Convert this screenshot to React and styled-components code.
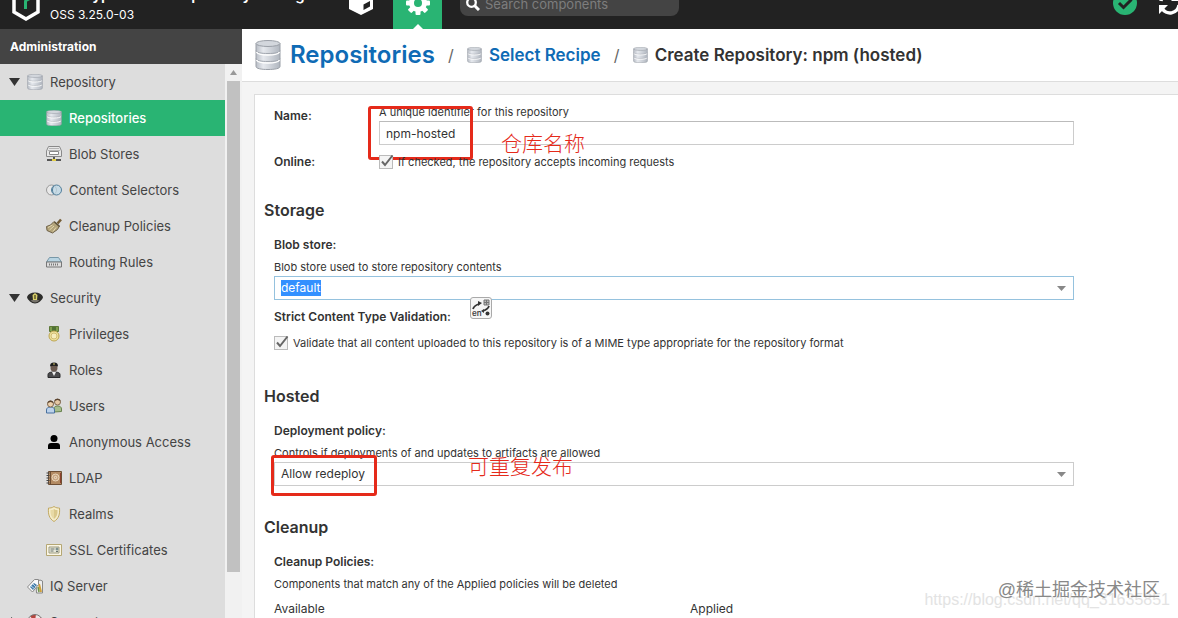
import React from 'react';
import styled, { createGlobalStyle } from 'styled-components';

const GlobalStyle = createGlobalStyle`
  * { box-sizing: border-box; }
  html, body, #root { height: 100%; }
  body {
    margin: 0;
    overflow: hidden;
    font-family: Inter, 'Noto Sans CJK SC', sans-serif;
    font-size: 13px;
    line-height: 16px;
    color: #333;
    background: #f4f4f4;
  }
  h1, h2, p, ul, nav { margin: 0; padding: 0; }
  button, input, select { font: inherit; color: inherit; }
`;

const Page = styled.div`
  position: relative;
  display: flex;
  flex-direction: column;
  height: 100vh;
  overflow: hidden;
`;

/* ---------- top bar ---------- */

const TopBar = styled.header`
  display: flex;
  flex: none;
  align-items: flex-end;
  height: 29px;
  background: #222;
  color: #fff;
`;

const Brand = styled.div`
  display: flex;
  align-items: flex-end;
  gap: 10px;
  flex: 0 0 336px;
  padding: 0 0 6px 12px;

  svg { margin-bottom: 2px; }
`;

const ProductName = styled.div`
  padding-bottom: 2px;
  font-size: 15px;
  font-weight: 600;
  line-height: 20px;
  white-space: nowrap;
`;

const Version = styled.div`
  font-size: 12px;
  line-height: 16px;
`;

const Modes = styled.div`
  display: flex;
  flex: none;
  gap: 8px;
`;

const ModeButton = styled.button`
  position: relative;
  display: flex;
  align-items: flex-end;
  justify-content: center;
  width: 49px;
  height: 48px;
  padding: 0 0 14px;
  border: 0;
  background: ${props => (props.$active ? '#29b473' : 'transparent')};
  color: #fff;

  &::after {
    content: '';
    display: ${props => (props.$active ? 'block' : 'none')};
    position: absolute;
    bottom: 0;
    left: 50%;
    margin-left: -5px;
    border: 5px solid transparent;
    border-top: 0;
    border-bottom-color: #fff;
  }
`;

const SearchBox = styled.label`
  display: flex;
  align-items: center;
  gap: 5px;
  width: 219px;
  height: 24px;
  margin: 0 auto 13px 18px;
  padding-left: 6px;
  border-radius: 8px;
  background: #444;
`;

const SearchInput = styled.input`
  flex: 1;
  min-width: 0;
  padding: 0;
  border: 0;
  outline: 0;
  background: none;
  color: #fff;

  &::placeholder { color: #7d7d7d; opacity: 1; }
`;

const StatusGroup = styled.div`
  display: flex;
  flex: none;
  gap: 21px;
  margin-right: -4px;
  padding-bottom: 14px;
`;

const StatusButton = styled.button`
  display: flex;
  width: 24px;
  height: 24px;
  padding: 0;
  border: 0;
  background: none;
`;

/* ---------- sidebar ---------- */

const Body = styled.div`
  display: flex;
  flex: 1;
  min-height: 0;
`;

const Sidebar = styled.aside`
  display: flex;
  flex: 0 0 242px;
  flex-direction: column;
`;

const SidebarTitle = styled.h2`
  flex: none;
  padding: 10px 10px 9px;
  background: #444;
  color: #fff;
  font-size: 12px;
  font-weight: 700;
`;

const SidebarBody = styled.div`
  display: flex;
  flex: 1;
  min-height: 0;
`;

const Tree = styled.nav`
  flex: 1;
  overflow: hidden;
  background: #ddd;
`;

const TreeItem = styled.a`
  display: flex;
  align-items: center;
  height: 36px;
  padding-left: ${props => (props.$child ? '46px' : '9px')};
  background: ${props => (props.$selected ? '#29b473' : 'transparent')};
  color: ${props => (props.$selected ? '#fff' : '#444')};
  font-weight: ${props => (props.$selected ? 500 : 400)};
  text-decoration: none;
`;

const Arrow = styled.span`
  display: flex;
  width: 18px;
`;

const TreeIcon = styled.span`
  display: flex;
  width: 16px;
  margin-right: 7px;
`;

const ScrollTrack = styled.div`
  display: flex;
  flex-direction: column;
  flex: 0 0 17px;
  align-items: center;
  background: #f1f1f1;

  svg { flex: none; margin: 6px 0; }
`;

const ScrollThumb = styled.div`
  width: 13px;
  height: 91%;
  margin-bottom: 46px;
  background: #c1c1c1;
`;

/* ---------- main ---------- */

const Main = styled.main`
  display: flex;
  flex: 1;
  flex-direction: column;
  min-width: 0;
`;

const Breadcrumb = styled.nav`
  display: flex;
  flex: none;
  align-items: center;
  height: 53px;
  padding-left: 13px;
  border-bottom: 1px solid #ddd;
  background: #fff;
  white-space: nowrap;
`;

const Crumb = styled.a`
  display: flex;
  align-items: center;
  gap: ${props => (props.$root ? '9px' : '7px')};
  color: ${props => (props.href ? '#0f6bb5' : '#333')};
  font-size: ${props => (props.$root ? '24px' : '17px')};
  font-weight: 600;
  line-height: 32px;
  text-decoration: none;
`;

const Slash = styled.span`
  width: 32px;
  color: #666;
  font-size: 16px;
  text-align: center;
`;

const Panel = styled.section`
  flex: 1;
  margin: 12px 0 0 12px;
  padding: 10px 104px 0 9px;
  border: 1px solid #ddd;
  border-right: 0;
  border-bottom: 0;
  background: #fff;
  overflow: hidden;
`;

const Row = styled.div`
  display: flex;
  align-items: flex-start;
  padding-left: 10px;
  min-height: ${props => props.$height};
`;

const RowLabel = styled.label`
  flex: 0 0 105px;
  padding-top: ${props => props.$top || '0'};
  font-size: 12px;
  font-weight: 600;
`;

const RowBody = styled.div`
  position: relative;
  flex: 1;
`;

const Section = styled.div`
  position: relative;
  padding-left: 10px;
`;

const SectionTitle = styled.h2`
  margin-left: -10px;
  padding: ${props => props.$top} 0 17px;
  font-size: 16px;
  font-weight: 600;
  line-height: 20px;
`;

const FieldLabel = styled.label`
  display: block;
  padding: ${props => props.$top || '0'} 0 7px;
  font-size: 12px;
  font-weight: 600;
`;

const Hint = styled.p`
  padding-bottom: 2px;
  font-size: 11px;
  line-height: 14px;
`;

const TextField = styled.input`
  display: block;
  width: 100%;
  height: 24px;
  padding: 0 6px;
  border: 1px solid #ccc;
  border-top-color: #bbb;
  outline: 0;
  font-size: 12px;
`;

const Combo = styled.div`
  display: flex;
  align-items: center;
  justify-content: space-between;
  height: 24px;
  padding: 0 7px 0 6px;
  border: 1px solid ${props => (props.$focused ? '#95c2de' : '#ccc')};
  background: #fff;
`;

const ComboSelect = styled.select`
  padding: 0;
  border: 0;
  outline: 0;
  appearance: none;
  background: ${props => (props.$focused ? '#3390ff' : 'transparent')};
  color: ${props => (props.$focused ? '#fff' : '#333')};
  font-size: 12px;
  line-height: 16px;
`;

const CheckRow = styled.label`
  display: flex;
  align-items: center;
  gap: 5px;
  padding-top: ${props => props.$top || '0'};
  font-size: 11px;
  line-height: 16px;
`;

const CheckBox = styled.input`
  width: 14px;
  height: 14px;
  margin: 0;
  appearance: none;
  border: 1px solid #bbb;
  background: #f4f4f4;
`;

const CheckHolder = styled.span`
  position: relative;
  display: flex;

  svg {
    position: absolute;
    top: -1px;
    left: 1px;
    pointer-events: none;
  }
`;

const Columns = styled.div`
  display: grid;
  grid-template-columns: 416px 1fr;
  padding-top: 8px;
  font-size: 12px;
`;

/* ---------- overlays ---------- */

const Marker = styled.div`
  position: absolute;
  top: ${props => props.$top};
  left: ${props => props.$left};
  width: ${props => props.$width};
  height: ${props => props.$height};
  border: 3px solid #e52a1a;
  border-radius: 3px;
  pointer-events: none;
`;

const Note = styled.div`
  position: absolute;
  top: ${props => props.$top};
  left: ${props => props.$left};
  color: #e52a1a;
  font-family: 'Noto Sans CJK SC', sans-serif;
  font-size: 21px;
  font-weight: 300;
  line-height: 24px;
  pointer-events: none;
`;

const TranslateButton = styled.button`
  position: absolute;
  top: 127px;
  left: 206px;
  display: flex;
  width: 22px;
  height: 22px;
  padding: 0;
  border: 1px solid #aaa;
  border-radius: 3px;
  background: #f6f6f6;
`;

const Watermark = styled.div`
  position: absolute;
  right: ${props => props.$right};
  bottom: ${props => props.$bottom};
  color: ${props => props.$color};
  font-family: 'Liberation Sans', 'Noto Sans CJK SC', sans-serif;
  font-size: ${props => props.$size};
  line-height: 24px;
  white-space: nowrap;
  pointer-events: none;
`;

/* ---------- icons ---------- */

const DatabaseIcon = ({ width = 16, height = 16 }) => (
  <svg width={width} height={height} viewBox="0 0 26 30" preserveAspectRatio="none">
    <defs>
      <linearGradient id="metal" x1="0" x2="1">
        <stop offset="0" stopColor="#b9bec6" />
        <stop offset="0.3" stopColor="#e6e9ee" />
        <stop offset="1" stopColor="#b0b6bf" />
      </linearGradient>
    </defs>
    <path d="M1 3.500v23c0 2 5 3 12 3s12-1 12-3v-23z" fill="url(#metal)" stroke="#9a9fa7" />
    <ellipse cx="13" cy="3.500" rx="12" ry="3" fill="#d3d7dd" stroke="#9a9fa7" />
    {[10.500, 18.500].map(y => (
      <g key={y} fill="none">
        <path d={`M1 ${y}c0 2 5 3 12 3s12-1 12-3`} stroke="#a2a7af" />
        <path d={`M1.500 ${y + 1.500}c1 2 5 3 11.500 3s10.500-1 11.500-3`} stroke="#fff" strokeWidth="1.500" />
      </g>
    ))}
  </svg>
);

const Icon = ({ children }) => (
  <svg width="16" height="16" viewBox="0 0 16 16" fill="none">{children}</svg>
);

const BlobIcon = () => (
  <Icon>
    <path d="M2.500.500h11l2 4.500v5.500H.500V5z" fill="#e8e8e8" stroke="#8a8a8a" />
    <path d="M3 2.500h10M2 4.500h12" stroke="#b5b5b5" />
    <path d="M3.500 5.500h9v3h-9z" fill="#fff" stroke="#888" />
    <path d="M8 11v3" stroke="#555" strokeWidth="2" />
    <path d="M1 14h14" stroke="#555" strokeWidth="2" />
    <path d="M6 13h4v2H6z" fill="#e3cf48" />
  </Icon>
);

const SelectorIcon = () => (
  <Icon>
    <circle cx="5.500" cy="8" r="5" fill="#e8e8e8" stroke="#999" />
    <circle cx="10.500" cy="8" r="5" fill="#bcd9e8" fillOpacity="0.7" stroke="#527f9b" />
    <path d="M8 4c-2 2-2 6 0 8" stroke="#527f9b" />
  </Icon>
);

const BroomIcon = () => (
  <Icon>
    <path d="M11.500 5.500L15 1.500" stroke="#755d35" strokeWidth="2.500" />
    <path d="M8 3.500L13.500 8l-2 3.500-5 3.500L1 12.500.500 8.500 4.500 7z" fill="#b3a47a" stroke="#6f6249" />
    <path d="M8.500 4l5 4.500" stroke="#5f543d" strokeWidth="1.500" />
    <path d="M2 9.500l4.500-2.500M3.500 12l4.500-4M7 13.500l3-4" stroke="#e4d8b0" />
  </Icon>
);

const RouterIcon = () => (
  <Icon>
    <path d="M3.500 3.500h9l3 4.500H.500z" fill="#b8d4e2" stroke="#7797a7" />
    <path d="M.500 8h15v5H.500z" fill="#ddd" stroke="#777" />
    <path d="M3 10.500h10" stroke="#777" strokeDasharray="1 1" strokeWidth="2" />
  </Icon>
);

const CapIcon = () => (
  <Icon>
    <path d="M0 7c1-3 4-4.500 8-4.500s7 1.500 8 4.500c0 2-2 3-3 4.500-3 2.500-7 2.500-10 0C2 10 0 9 0 7z" fill="#2d2d2b" />
    <path d="M3.500 10.500c3-1.500 6-1.500 9 0-3 2.500-6 2.500-9 0z" fill="#77736a" />
    <path d="M8 3l2.500 2-.500 5H6l-.500-5z" fill="#d9d06c" />
    <path d="M8 5v4" stroke="#5d5727" strokeWidth="1.500" />
  </Icon>
);

const MedalIcon = () => (
  <Icon>
    <path d="M3.500.500h9v5h-9z" fill="#7f9e4d" stroke="#5d7838" />
    <path d="M6 1h4v4H6z" fill="#4f7135" />
    <circle cx="8" cy="10" r="5" fill="#efe3a0" stroke="#bda54e" />
    <circle cx="8" cy="10" r="3" fill="#f6edbd" stroke="#d2bd72" />
  </Icon>
);

const OfficerIcon = () => (
  <Icon>
    <path d="M2 15.500v-3C2 10.500 5 10 8 10s6 .500 6 2.500v3z" fill="#4b4b4d" stroke="#29292b" />
    <circle cx="8" cy="6" r="3.500" fill="#6b5a50" />
    <path d="M4 4.500C4 2 5 .500 8 .500s4 1.500 4 4c-2.500-1-5.500-1-8 0z" fill="#1d1d1d" />
    <path d="M6 10l2 4 2-4z" fill="#eee" />
    <path d="M7 2h2" stroke="#d2c46a" />
  </Icon>
);

const UsersIcon = () => (
  <Icon>
    <path d="M8 14v-3c0-2 1-3 3.500-3s4 1 4 3v2.500z" fill="#a6bd8b" stroke="#68834f" />
    <circle cx="11.500" cy="4" r="3" fill="#e5c8a4" stroke="#80684f" />
    <path d="M8.500 3c0-3 6-3 6 0l-3-1z" fill="#59432f" />
    <path d="M.500 15v-3c0-2 1.500-3 4-3s4 1 4 3v3z" fill="#bcd2eb" stroke="#49719f" />
    <circle cx="4.500" cy="6" r="3" fill="#edd1ad" stroke="#80684f" />
    <path d="M1.500 5c0-3.500 6-3.500 6 0l-3-1z" fill="#59432f" />
  </Icon>
);

const PersonIcon = () => (
  <Icon>
    <circle cx="8" cy="4.500" r="3.500" fill="#000" />
    <path d="M2 15v-3c0-2 1-3 3-3h6c2 0 3 1 3 3v3z" fill="#000" />
  </Icon>
);

const BookIcon = () => (
  <Icon>
    <path d="M2.500 1.500h13v13h-13z" fill="#b38b63" stroke="#6e4f34" />
    <path d="M14.500 3v10" stroke="#8c3f2d" />
    <circle cx="9.500" cy="7.500" r="3.500" fill="#c6a27c" stroke="#ead7bd" />
    <circle cx="9.500" cy="7.500" r="1.200" stroke="#f2e3d0" />
    <path d="M4.500 1.500v13" stroke="#6e4f34" />
    <path d="M.500 3h3M.500 5.500h3M.500 8h3M.500 10.500h3M.500 13h3" stroke="#444" />
  </Icon>
);

const ShieldIcon = () => (
  <Icon>
    <path d="M8 .500c2 1.500 4 1.500 5.500 1.500.500 6-.500 10.500-5.500 13.500C3 12.500 2 8 2.500 2 4 2 6 2 8 .500z" fill="#f5edcc" stroke="#c2a962" />
    <path d="M8 3c1 1 2.500 1 3.500 1 .200 4-.500 7-3.500 9z" fill="#dac88c" />
    <path d="M8 3C7 4 5.500 4 4.500 4c-.200 4 .500 7 3.500 9z" fill="#e8daa6" />
  </Icon>
);

const CertificateIcon = () => (
  <Icon>
    <path d="M.500 2.500h15v11H.500z" fill="#faf6e5" stroke="#b5a774" />
    <path d="M3 5h10v6H3z" fill="#e9e9db" stroke="#9c9a80" />
    <path d="M4.500 7h4M4.500 9h3M10 9.500h2" stroke="#68736b" />
    <circle cx="11" cy="7" r="1.500" fill="#7d9291" />
  </Icon>
);

const TagsIcon = () => (
  <Icon>
    <path d="M9 4l4-2 2.500 1v12h-6z" fill="#eee" stroke="#888" />
    <path d="M12 6l2 8" stroke="#d1a038" strokeWidth="2" />
    <path d="M11 9l1 5" stroke="#6e9246" strokeWidth="1.500" />
    <path d="M.500 9l7-7.500h4v5L5.500 14z" fill="#fafafa" stroke="#888" />
    <path d="M3 9l4-4 3 2-4 5z" fill="#437ba8" />
    <path d="M4 8l4 3M6 6l3 3" stroke="#b9d5e8" />
  </Icon>
);

const SupportIcon = () => (
  <Icon>
    <circle cx="8" cy="8" r="5.500" stroke="#ece8e8" strokeWidth="4" />
    <circle cx="8" cy="8" r="5.500" stroke="#b5463f" strokeWidth="4" strokeDasharray="4.320 4.320" strokeDashoffset="-2.160" transform="rotate(22 8 8)" />
    <circle cx="8" cy="8" r="7.500" stroke="#777" />
  </Icon>
);

const DownArrow = () => (
  <svg width="11" height="8" viewBox="0 0 11 8"><path d="M0 0h11L5.500 8z" fill="#333" /></svg>
);

const RightArrow = () => (
  <svg width="11" height="10" viewBox="0 0 11 10"><path d="M2 0v10l7-5z" fill="#333" /></svg>
);

const Tick = () => (
  <svg width="14" height="14" viewBox="0 0 14 14">
    <path d="M2 7.500l3 3.500 7.500-9.500" fill="none" stroke="#666" strokeWidth="2" />
  </svg>
);

const Caret = () => (
  <svg width="9" height="5" viewBox="0 0 9 5"><path d="M0 0h9L4.500 5z" fill="#888" /></svg>
);

const LogoIcon = () => (
  <svg width="28" height="32" viewBox="0 0 28 32" fill="none">
    <path d="M14 2L2 9v14l12 7 12-7V9z" stroke="#fff" strokeWidth="3.500" />
    <path d="M13.500 20v-7c0-2 1.500-3 4-3" stroke="#29b473" strokeWidth="3" />
  </svg>
);

const CubeIcon = () => (
  <svg width="26" height="28" viewBox="0 0 26 28">
    <path d="M13 0l12 5v17l-12 6-12-6V5z" fill="#fff" />
    <path d="M3 7l10 4 10-4" fill="none" stroke="#222" strokeWidth="1.500" />
    <path d="M15.500 17.500l6.500-3.500v5.500L15.500 23z" fill="#222" />
  </svg>
);

const GearIcon = () => (
  <svg width="24" height="24" viewBox="0 0 24 24" fill="#fff">
    {[0, 45, 90, 135].map(angle => (
      <rect key={angle} x="9.500" y="0" width="5" height="24" rx="1" transform={`rotate(${angle} 12 12)`} />
    ))}
    <circle cx="12" cy="12" r="9" />
    <circle cx="12" cy="12" r="4" fill="#29b473" />
  </svg>
);

const SearchIcon = () => (
  <svg width="14" height="14" viewBox="0 0 14 14" fill="none" stroke="#fff">
    <circle cx="5.500" cy="5.500" r="4.300" strokeWidth="2.300" />
    <path d="M8.500 8.500l4.500 4.500" strokeWidth="3" />
  </svg>
);

const CheckCircleIcon = () => (
  <svg width="24" height="24" viewBox="0 0 24 24">
    <circle cx="12" cy="12" r="12" fill="#29b473" />
    <path d="M6 12l4.500 4.500L18.500 8.500" fill="none" stroke="#222" strokeWidth="3" />
  </svg>
);

const RefreshIcon = () => (
  <svg width="24" height="24" viewBox="0 0 24 24" fill="none" stroke="#fff" strokeWidth="3.500">
    <path d="M3 10a9 9 0 0 1 17-3M21 14a9 9 0 0 1-17 3" />
    <path d="M22 1v9h-9zM1 23v-9h9z" fill="#fff" stroke="none" />
  </svg>
);

const TranslateIcon = () => (
  <svg width="20" height="20" viewBox="0 0 20 20">
    <path d="M2 11c1-3 3-4 6-5M18 8c-1 3-3 4-6 5" fill="none" stroke="#333" strokeWidth="1.800" />
    <path d="M7 3l4 2-4 3zM13 11v4l-3-2z" fill="#333" />
    <path d="M13 2h5v5h-5zM13 4.500h5M15.500 2v5" fill="#bbb" stroke="#777" />
    <circle cx="16.500" cy="15.500" r="2" fill="#333" />
    <text x="1" y="18" fontSize="8" fontWeight="600" fill="#444">en</text>
  </svg>
);

/* ---------- data ---------- */

const treeItems = [
  { label: 'Repository', icon: <DatabaseIcon />, arrow: 'down' },
  { label: 'Repositories', icon: <DatabaseIcon />, child: true, selected: true },
  { label: 'Blob Stores', icon: <BlobIcon />, child: true },
  { label: 'Content Selectors', icon: <SelectorIcon />, child: true },
  { label: 'Cleanup Policies', icon: <BroomIcon />, child: true },
  { label: 'Routing Rules', icon: <RouterIcon />, child: true },
  { label: 'Security', icon: <CapIcon />, arrow: 'down' },
  { label: 'Privileges', icon: <MedalIcon />, child: true },
  { label: 'Roles', icon: <OfficerIcon />, child: true },
  { label: 'Users', icon: <UsersIcon />, child: true },
  { label: 'Anonymous Access', icon: <PersonIcon />, child: true },
  { label: 'LDAP', icon: <BookIcon />, child: true },
  { label: 'Realms', icon: <ShieldIcon />, child: true },
  { label: 'SSL Certificates', icon: <CertificateIcon />, child: true },
  { label: 'IQ Server', icon: <TagsIcon /> },
  { label: 'Support', icon: <SupportIcon />, arrow: 'right' },
];

const Check = ({ id, children, top }) => (
  <CheckRow $top={top} htmlFor={id}>
    <CheckHolder>
      <CheckBox id={id} type="checkbox" defaultChecked />
      <Tick />
    </CheckHolder>
    {children}
  </CheckRow>
);

const App = () => (
  <Page>
    <GlobalStyle />
    <TopBar>
      <Brand>
        <LogoIcon />
        <div>
          <ProductName>Sonatype Nexus Repository Manager</ProductName>
          <Version>OSS 3.25.0-03</Version>
        </div>
      </Brand>
      <Modes>
        <ModeButton aria-label="Browse"><CubeIcon /></ModeButton>
        <ModeButton $active aria-label="Administration"><GearIcon /></ModeButton>
      </Modes>
      <SearchBox>
        <SearchIcon />
        <SearchInput aria-label="Search components" placeholder="Search components" />
      </SearchBox>
      <StatusGroup>
        <StatusButton aria-label="System status"><CheckCircleIcon /></StatusButton>
        <StatusButton aria-label="Refresh"><RefreshIcon /></StatusButton>
      </StatusGroup>
    </TopBar>

    <Body>
      <Sidebar>
        <SidebarTitle>Administration</SidebarTitle>
        <SidebarBody>
          <Tree>
            {treeItems.map(item => (
              <TreeItem key={item.label} href="#" $child={item.child} $selected={item.selected}>
                {!item.child && (
                  <Arrow>
                    {item.arrow === 'down' && <DownArrow />}
                    {item.arrow === 'right' && <RightArrow />}
                  </Arrow>
                )}
                <TreeIcon>{item.icon}</TreeIcon>
                {item.label}
              </TreeItem>
            ))}
          </Tree>
          <ScrollTrack>
            <svg width="7" height="5" viewBox="0 0 7 5"><path d="M0 5l3.500-5L7 5z" fill="#999" /></svg>
            <ScrollThumb />
          </ScrollTrack>
        </SidebarBody>
      </Sidebar>

      <Main>
        <Breadcrumb>
          <Crumb $root href="#"><DatabaseIcon width={26} height={30} />Repositories</Crumb>
          <Slash>/</Slash>
          <Crumb href="#"><DatabaseIcon width={15} />Select Recipe</Crumb>
          <Slash>/</Slash>
          <Crumb as="span"><DatabaseIcon width={15} />Create Repository: npm (hosted)</Crumb>
        </Breadcrumb>

        <Panel>
          <Row $height="49px">
            <RowLabel $top="3px" htmlFor="name">Name:</RowLabel>
            <RowBody>
              <Hint>A unique identifier for this repository</Hint>
              <TextField id="name" defaultValue="npm-hosted" />
              <Marker $top="1px" $left="-11px" $width="105px" $height="54px" />
              <Note $top="25px" $left="122px">仓库名称</Note>
            </RowBody>
          </Row>
          <Row $height="16px">
            <RowLabel htmlFor="online">Online:</RowLabel>
            <RowBody>
              <Check id="online">If checked, the repository accepts incoming requests</Check>
            </RowBody>
          </Row>

          <Section>
            <SectionTitle $top="30px">Storage</SectionTitle>
            <FieldLabel htmlFor="blob">Blob store:</FieldLabel>
            <Hint>Blob store used to store repository contents</Hint>
            <Combo $focused>
              <ComboSelect $focused id="blob"><option>default</option></ComboSelect>
              <Caret />
            </Combo>
            <TranslateButton aria-label="Translate"><TranslateIcon /></TranslateButton>
            <FieldLabel $top="9px" htmlFor="strict">Strict Content Type Validation:</FieldLabel>
            <Check id="strict" top="3px">
              Validate that all content uploaded to this repository is of a MIME type appropriate for the repository format
            </Check>
          </Section>

          <Section>
            <SectionTitle $top="35px">Hosted</SectionTitle>
            <FieldLabel htmlFor="policy">Deployment policy:</FieldLabel>
            <Hint>Controls if deployments of and updates to artifacts are allowed</Hint>
            <Combo>
              <ComboSelect id="policy"><option>Allow redeploy</option></ComboSelect>
              <Caret />
            </Combo>
            <Marker $top="104px" $left="7px" $width="106px" $height="41px" />
            <Note $top="102px" $left="204px">可重复发布</Note>
          </Section>

          <Section>
            <SectionTitle $top="31px">Cleanup</SectionTitle>
            <FieldLabel as="div">Cleanup Policies:</FieldLabel>
            <Hint>Components that match any of the Applied policies will be deleted</Hint>
            <Columns>
              <span>Available</span>
              <span>Applied</span>
            </Columns>
          </Section>
        </Panel>
      </Main>
    </Body>

    <Watermark $right="8px" $bottom="6px" $size="16px" $color="#e3e3e3">https://blog.csdn.net/qq_31635851</Watermark>
    <Watermark $right="18px" $bottom="16px" $size="18px" $color="#888">@稀土掘金技术社区</Watermark>
  </Page>
);

export default App;
